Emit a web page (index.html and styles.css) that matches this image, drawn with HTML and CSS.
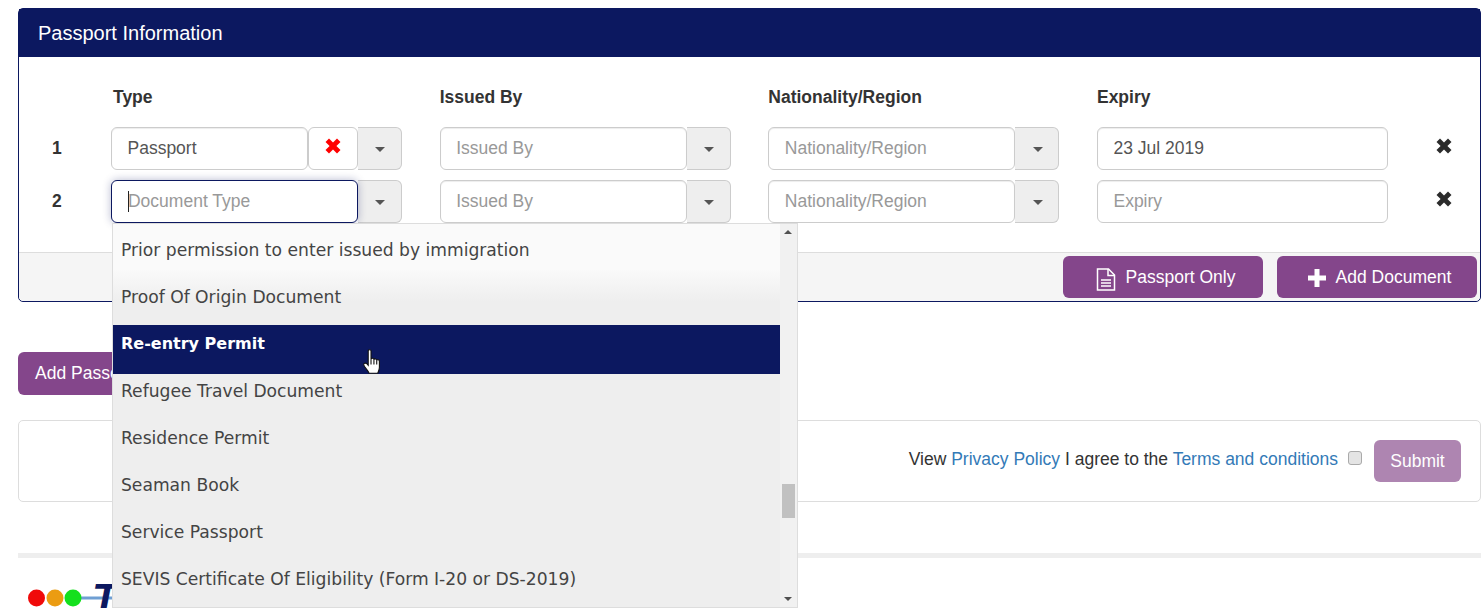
FILE: index.html
```html
<!DOCTYPE html>
<html lang="en">
<head>
    <meta charset="UTF-8">
    <meta name="viewport" content="width=device-width, initial-scale=1.0">
    <title>Passport Information</title>
    <link rel="stylesheet" href="styles.css">
</head>
<body>
    <div class="container">
        <!-- Passport panel -->
        <div class="panel">
            <div class="panel-heading">Passport Information</div>
            <div class="panel-body">
                <div class="doc-grid">
                    <div></div>
                    <div class="col-label col-first">Type</div>
                    <div class="col-label">Issued By</div>
                    <div class="col-label">Nationality/Region</div>
                    <div class="col-label">Expiry</div>
                    <div></div>

                    <div class="row-num">1</div>
                    <div class="combo">
                        <input class="field" type="text" value="Passport">
                        <button class="clear-btn" type="button">
                            <svg class="icon-x" viewBox="0 0 16 16"><path d="M0.5 4 4 0.5 8 4.6 12 0.5 15.5 4 11.4 8 15.5 12 12 15.5 8 11.4 4 15.5 0.5 12 4.6 8Z"/></svg>
                        </button>
                        <button class="arrow-btn" type="button"><span class="caret"></span></button>
                    </div>
                    <div class="combo">
                        <input class="field" type="text" placeholder="Issued By">
                        <button class="arrow-btn" type="button"><span class="caret"></span></button>
                    </div>
                    <div class="combo">
                        <input class="field" type="text" placeholder="Nationality/Region">
                        <button class="arrow-btn" type="button"><span class="caret"></span></button>
                    </div>
                    <input class="field" type="text" value="23 Jul 2019">
                    <div class="row-remove">
                        <svg class="icon-remove" viewBox="0 0 16 16"><path d="M0.5 4 4 0.5 8 4.6 12 0.5 15.5 4 11.4 8 15.5 12 12 15.5 8 11.4 4 15.5 0.5 12 4.6 8Z"/></svg>
                    </div>

                    <div class="row-num">2</div>
                    <div class="combo combo-open">
                        <input class="field field-focus" type="text" placeholder="Document Type">
                        <span class="text-caret"></span>
                        <button class="arrow-btn" type="button"><span class="caret"></span></button>

                        <!-- Open dropdown -->
                        <div class="dropdown">
                            <ul class="dropdown-list">
                                <li>Prior permission to enter issued by immigration</li>
                                <li>Proof Of Origin Document</li>
                                <li class="active">Re-entry Permit</li>
                                <li>Refugee Travel Document</li>
                                <li>Residence Permit</li>
                                <li>Seaman Book</li>
                                <li>Service Passport</li>
                                <li>SEVIS Certificate Of Eligibility (Form I-20 or DS-2019)</li>
                            </ul>
                            <div class="scrollbar">
                                <span class="scroll-up"></span>
                                <span class="scroll-thumb"></span>
                                <span class="scroll-down"></span>
                            </div>
                            <svg class="hand" viewBox="0.2 0.4 14 22" preserveAspectRatio="none">
                                <path d="M4.500 2C4.500.7 6.800.7 6.800 2V9.500C7 8.300 9 8.300 9.200 9.800 9.500 8.700 11.400 8.900 11.500 10.400 11.900 9.500 13.700 9.800 13.700 11.300V16.500C13.700 19 12.800 20.300 12.300 21.800H5.300C4.700 19.800 1 16 .8 14.300.6 13 2.300 12.300 3.300 13.400L4.500 14.800Z"/>
                                <path d="M6.800 9.500V14M9.200 9.800V14M11.500 10.400V14"/>
                            </svg>
                        </div>
                    </div>
                    <div class="combo">
                        <input class="field" type="text" placeholder="Issued By">
                        <button class="arrow-btn" type="button"><span class="caret"></span></button>
                    </div>
                    <div class="combo">
                        <input class="field" type="text" placeholder="Nationality/Region">
                        <button class="arrow-btn" type="button"><span class="caret"></span></button>
                    </div>
                    <input class="field" type="text" placeholder="Expiry">
                    <div class="row-remove">
                        <svg class="icon-remove" viewBox="0 0 16 16"><path d="M0.5 4 4 0.5 8 4.6 12 0.5 15.5 4 11.4 8 15.5 12 12 15.5 8 11.4 4 15.5 0.5 12 4.6 8Z"/></svg>
                    </div>
                </div>
            </div>
            <div class="panel-footer">
                <button class="btn btn-wide btn-file" type="button">
                    <svg class="icon-file" viewBox="0 0 20 23">
                        <path d="M1.500 1H12.500L18.500 7V22H1.500Z"/>
                        <path d="M12 1V7.500H18.500M5 12H15M5 15H15M5 18H15"/>
                    </svg>
                    Passport Only
                </button>
                <button class="btn btn-wide" type="button">
                    <svg class="icon-plus" viewBox="0 0 18 18"><path d="M6.500 0H11.500V6.500H18V11.500H11.500V18H6.500V11.500H0V6.500H6.500Z"/></svg>
                    Add Document
                </button>
            </div>
        </div>

        <button class="btn btn-add" type="button">Add Passenger</button>

        <!-- Agreement -->
        <div class="agree-box">
            <span class="agree-text">View <a href="#">Privacy Policy</a> I agree to the <a href="#">Terms and conditions</a></span>
            <input class="agree-check" type="checkbox">
            <button class="btn btn-submit" type="button">Submit</button>
        </div>

        <div class="divider"></div>

        <div class="logo">
            <svg width="112" height="25" viewBox="0 0 112 25">
                <line x1="60" y1="15" x2="100" y2="15" stroke="#6f9fd3" stroke-width="3"/>
                <circle cx="18.500" cy="15" r="8.500" fill="#f00a0a"/>
                <circle cx="37" cy="15" r="8.500" fill="#eb9c12"/>
                <circle cx="55" cy="15" r="8.500" fill="#14e01e"/>
                <text class="logo-letter" x="74" y="30">T</text>
            </svg>
        </div>
    </div>
</body>
</html>
```

FILE: styles.css
```css
html, body {
    height: 608px;
    overflow: hidden;
}

body {
    font-family: "Liberation Sans", Arial, sans-serif;
    font-size: 17.5px;
    color: #333;
    background-color: white;
    margin: 0;
    padding: 0;
}

.container {
    width: 1463px;
    margin: 8px 0 0 18px;
}

.panel {
    border: 1px solid #0c1860;
    border-radius: 5px;
    height: 294px;
    box-sizing: border-box;
    background: white;
}

.panel-heading {
    height: 48px;
    line-height: 48px;
    padding-left: 19px;
    background-color: #0c1860;
    color: white;
    font-size: 20px;
}

.panel-body {
    height: 195px;
    box-sizing: border-box;
    padding: 28px 0 0 33px;
}

.doc-grid {
    display: grid;
    grid-template-columns: 21.33px 291px 291px 291px 291px 60px;
    column-gap: 37.67px;
    grid-template-rows: 32px 43px 43px;
    row-gap: 10px;
    align-items: center;
}

.col-label {
    font-weight: bold;
    align-self: start;
    line-height: 24px;
}

.col-first {
    padding-left: 2px;
}

.row-num {
    font-weight: bold;
}

.combo {
    display: flex;
    position: relative;
    height: 43px;
}

.field {
    flex: 1;
    min-width: 0;
    width: 100%;
    height: 43px;
    box-sizing: border-box;
    padding: 0 15.5px;
    border: 1px solid #ccc;
    border-radius: 6px;
    font-family: inherit;
    font-size: 17.5px;
    color: #555;
    background: white;
    box-shadow: inset 0 1px 1px rgba(0, 0, 0, 0.075);
    outline: none;
}

.field::placeholder {
    color: #999;
    opacity: 1;
}

.field-focus {
    border-color: #0c1860;
    box-shadow: 0 0 8px rgba(12, 24, 96, 0.3);
    position: relative;
    padding-left: 16px;
}

.text-caret {
    position: absolute;
    left: 17px;
    top: 11px;
    width: 1px;
    height: 21px;
    background: #222;
    z-index: 2;
}

.clear-btn {
    width: 50px;
    height: 43px;
    padding: 0 0 2px;
    border: 1px solid #ccc;
    border-radius: 6px;
    background: white;
}

.icon-x {
    width: 16px;
    height: 16px;
    fill: #f00;
}

.arrow-btn {
    width: 44px;
    height: 43px;
    padding: 0 0 0 2px;
    border: 1px solid #ccc;
    border-left: none;
    border-radius: 0 6px 6px 0;
    background: #eee;
}

.caret {
    display: inline-block;
    vertical-align: middle;
    border-top: 5px solid #555;
    border-left: 5px solid transparent;
    border-right: 5px solid transparent;
}

.row-remove {
    padding-left: 10px;
    height: 16px;
    margin-top: -6px;
}

.icon-remove {
    width: 16px;
    height: 16px;
    fill: #2b2b2b;
    display: block;
}

/* dropdown */
.dropdown {
    position: absolute;
    top: 43px;
    left: 1px;
    width: 686px;
    height: 385px;
    box-sizing: border-box;
    display: flex;
    border: 1px solid #ddd;
    background: #eee;
    z-index: 5;
}

.dropdown-list {
    flex: 1;
    margin: 0;
    padding: 7px 0 0;
    list-style: none;
    overflow: hidden;
    font-family: "DejaVu Sans", sans-serif;
    font-size: 17.15px;
    color: #444;
    background: linear-gradient(#fafafa 0, #fafafa 45px, #eee 78px);
}

.dropdown-list li {
    height: 47px;
    padding-left: 8px;
    line-height: 39px;
    white-space: nowrap;
}

.dropdown-list li.active {
    height: 49px;
    margin-bottom: -2px;
    line-height: 37px;
    background: #0c1860;
    color: white;
    font-weight: bold;
    font-size: 16px;
}

.scrollbar {
    position: relative;
    width: 17px;
    background: #f1f1f1;
}

.scroll-up,
.scroll-down {
    position: absolute;
    left: 4px;
    border-left: 4px solid transparent;
    border-right: 4px solid transparent;
}

.scroll-up {
    top: 6px;
    border-bottom: 4px solid #505050;
}

.scroll-down {
    bottom: 6px;
    border-top: 4px solid #505050;
}

.scroll-thumb {
    position: absolute;
    top: 260px;
    left: 2px;
    width: 13px;
    height: 34px;
    background: #c1c1c1;
}

.hand {
    position: absolute;
    left: 250px;
    top: 125px;
    width: 17px;
    height: 25px;
    fill: white;
    stroke: #111;
    stroke-width: 0.9;
}

/* footer and buttons */
.panel-footer {
    height: 49px;
    box-sizing: border-box;
    border-top: 1px solid #ddd;
    border-radius: 0 0 5px 5px;
    background: #f5f5f5;
    display: flex;
    justify-content: flex-end;
    gap: 14px;
    padding: 3px 3px 0 0;
}

.btn {
    height: 42px;
    border: none;
    border-radius: 6px;
    background: #84468b;
    color: white;
    font-family: inherit;
    font-size: 17.5px;
}

.btn-wide {
    width: 200px;
    display: flex;
    align-items: center;
    justify-content: center;
    gap: 10px;
    padding: 0 0 0 5px;
}

.icon-file {
    width: 20px;
    height: 23px;
    fill: none;
    stroke: white;
    stroke-width: 1.5;
    margin-top: 4px;
}

.icon-plus {
    width: 18px;
    height: 18px;
    fill: white;
    margin-top: 2px;
}

.btn-add {
    display: block;
    margin-top: 50px;
    width: 160px;
    height: 43px;
    padding: 0 0 0 17px;
    text-align: left;
}

.agree-box {
    margin-top: 25px;
    height: 82px;
    box-sizing: border-box;
    border: 1px solid #ddd;
    border-radius: 5px;
    display: flex;
    align-items: center;
    justify-content: flex-end;
    padding-right: 19px;
}

.agree-text {
    padding-bottom: 4px;
}

.agree-box a {
    color: #337ab7;
    text-decoration: none;
}

.agree-check {
    appearance: none;
    width: 14px;
    height: 14px;
    margin: 0 12px 6px 10px;
    border: 1px solid #aaa;
    border-radius: 3px;
    background: #e4e4e4;
}

.btn-submit {
    width: 87px;
    background: #ae85b1;
    padding: 0;
}

.divider {
    margin-top: 51px;
    height: 5px;
    background: #eee;
}

.logo {
    margin-top: 25px;
    height: 25px;
    overflow: hidden;
}

.logo svg {
    display: block;
}

.logo-letter {
    font-family: "Liberation Sans", sans-serif;
    font-weight: bold;
    font-style: italic;
    font-size: 42px;
    fill: #0c1860;
}
```
